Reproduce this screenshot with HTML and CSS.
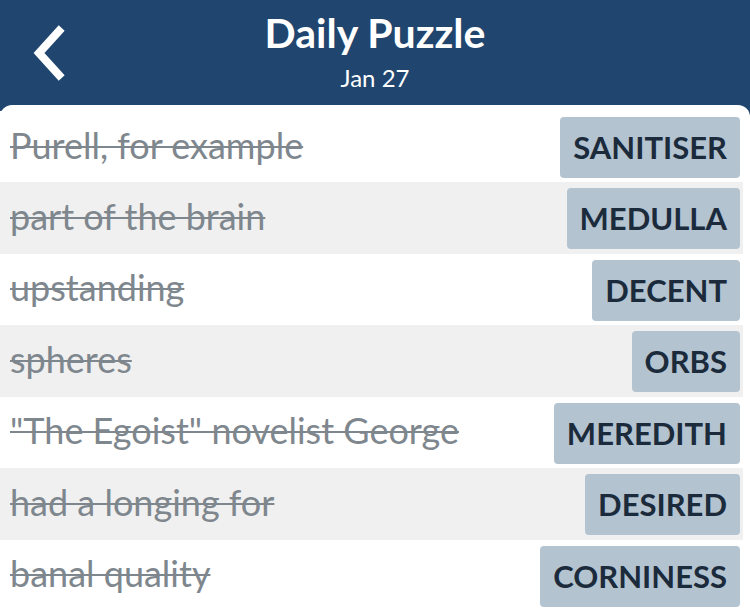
FILE: index.html
```html
<!DOCTYPE html>
<html lang="en">
<head>
    <meta charset="UTF-8">
    <meta name="viewport" content="width=device-width, initial-scale=1.0">
    <title>Daily Puzzle</title>
    <link rel="stylesheet" href="styles.css">
</head>
<body>
    <div class="screen">
        <div class="header">
            <a class="back" href="#">
                <svg width="40" height="56" viewBox="0 0 40 56">
                    <path d="M28 6 L8 28 L28 50" fill="none" stroke="#fff" stroke-width="8" stroke-linecap="square"/>
                </svg>
            </a>
            <div class="title">
                <h1>Daily Puzzle</h1>
                <p class="date">Jan 27</p>
            </div>
        </div>

        <div class="list">
            <div class="row">
                <span class="clue">Purell, for example</span>
                <span class="answer">SANITISER</span>
            </div>
            <div class="row alt">
                <span class="clue">part of the brain</span>
                <span class="answer">MEDULLA</span>
            </div>
            <div class="row">
                <span class="clue">upstanding</span>
                <span class="answer">DECENT</span>
            </div>
            <div class="row alt">
                <span class="clue">spheres</span>
                <span class="answer">ORBS</span>
            </div>
            <div class="row">
                <span class="clue">"The Egoist" novelist George</span>
                <span class="answer">MEREDITH</span>
            </div>
            <div class="row alt">
                <span class="clue">had a longing for</span>
                <span class="answer">DESIRED</span>
            </div>
            <div class="row">
                <span class="clue">banal quality</span>
                <span class="answer">CORNINESS</span>
            </div>
        </div>
    </div>
</body>
</html>
```

FILE: styles.css
```css
body {
    margin: 0;
    font-family: Lato, "Open Sans", sans-serif;
    background: #ffffff;
}
.screen {
    width: 750px;
    height: 611px;
    overflow: hidden;
    background: #20466f;
}
.header {
    height: 105px;
    position: relative;
    color: #fff;
}
.back {
    position: absolute;
    left: 31px;
    top: 25px;
}
.title {
    text-align: center;
    padding-top: 11px;
}
.title h1 {
    margin: 0;
    font-size: 41px;
    font-weight: 700;
    line-height: 44px;
}
.date {
    margin: 10px 0 0;
    font-size: 24px;
    line-height: 26px;
}
.list {
    background: #ffffff;
    border-radius: 12px 12px 0 0;
    padding: 6px 7px 0 0;
    height: 100%;
}
.row {
    height: 71.5px;
    display: flex;
    align-items: center;
    justify-content: space-between;
    padding: 0 3px 0 10px;
    background: #ffffff;
}
.row:first-child {
    height: 71px;
}
.row.alt {
    background: #f0f0f0;
}
.clue {
    font-size: 36px;
    color: #7f878e;
    text-decoration: line-through;
    text-decoration-thickness: 2px;
    margin-bottom: 4px;
}
.answer {
    background: #b3c3d0;
    color: #1b2b3c;
    font-size: 31px;
    font-weight: 700;
    height: 61px;
    line-height: 61px;
    padding: 0 13px;
    border-radius: 4px;
    margin-top: 2px;
}
```
